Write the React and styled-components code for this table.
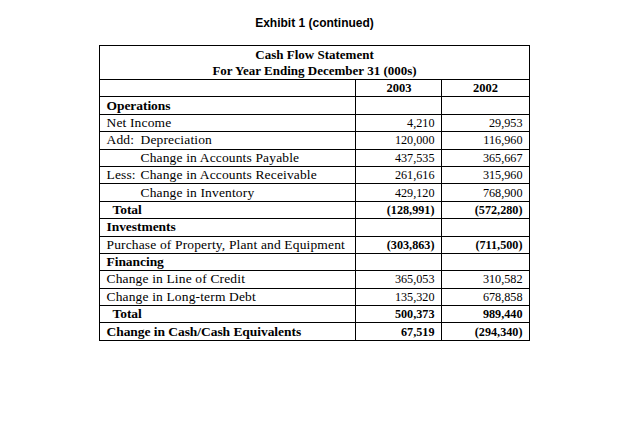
import React from "react";
import styled, { createGlobalStyle } from "styled-components";

const Global = createGlobalStyle`
  html, body { margin: 0; padding: 0; background: #fff; }
  body { width: 631px; height: 425px; overflow: hidden; }
`;

const Page = styled.div`
  width: 429px;
  margin-left: 100px;
  padding-top: 16px;
  display: flex;
  flex-direction: column;
  align-items: center;
`;

const Title = styled.h1`
  margin: 0 0 15px 0;
  font-family: "Liberation Sans", Arial, sans-serif;
  font-weight: bold;
  font-size: 12px;
  line-height: 14px;
  color: #000;
`;

const Table = styled.table`
  width: 430px;
  border-collapse: collapse;
  border: 1px solid #000;
  font-family: "Liberation Serif", "Times New Roman", serif;
  font-size: 12.5px;
  color: #000;
  table-layout: fixed;
`;

const HeadCell = styled.th`
  border: 1px solid #000;
  font-weight: bold;
  font-size: 13px;
  line-height: 16px;
  padding: 1px 0 0 0;
  text-align: center;
`;

const YearCell = styled.th`
  border: 1px solid #000;
  font-weight: bold;
  height: 16.4px;
  padding: 0;
  text-align: center;
  line-height: 14px;
`;

const Label = styled.td`
  border: 1px solid #000;
  height: 16.4px;
  padding: 0 0 0 ${(p) => (p.$indent ? p.$indent : 6)}px;
  font-size: 13.5px;
  letter-spacing: ${(p) => (p.$bold ? "-0.05px" : "0.15px")};
  line-height: 14px;
  font-weight: ${(p) => (p.$bold ? "bold" : "normal")};
  white-space: nowrap;
`;

const Num = styled.td`
  border: 1px solid #000;
  height: 16.4px;
  padding: 0 ${(p) => p.$pad}px 0 0;
  text-align: right;
  font-size: 12.2px;
  line-height: 14px;
  font-weight: ${(p) => (p.$bold ? "bold" : "normal")};
`;

const Prefix = styled.span`
  display: inline-block;
  width: 34px;
`;

const rows = [
  { label: "Operations", bold: true },
  { label: "Net Income", a: "4,210", b: "29,953" },
  { prefix: "Add:", label: "Depreciation", a: "120,000", b: "116,960" },
  { label: "Change in Accounts Payable", indent: 40, a: "437,535", b: "365,667" },
  { prefix: "Less:", label: "Change in Accounts Receivable", a: "261,616", b: "315,960" },
  { label: "Change in Inventory", indent: 40, a: "429,120", b: "768,900" },
  { label: "Total", bold: true, indent: 12, a: "(128,991)", b: "(572,280)" },
  { label: "Investments", bold: true },
  { label: "Purchase of Property, Plant and Equipment", a: "(303,863)", b: "(711,500)", boldNums: true },
  { label: "Financing", bold: true },
  { label: "Change in Line of Credit", a: "365,053", b: "310,582" },
  { label: "Change in Long-term Debt", a: "135,320", b: "678,858" },
  { label: "Total", bold: true, indent: 12, a: "500,373", b: "989,440" },
  { label: "Change in Cash/Cash Equivalents", bold: true, a: "67,519", b: "(294,340)" },
];

export default function App() {
  return (
    <>
      <Global />
      <Page>
        <Title>Exhibit 1 (continued)</Title>
        <Table>
          <colgroup>
            <col style={{ width: 256 }} />
            <col style={{ width: 86 }} />
            <col style={{ width: 87 }} />
          </colgroup>
          <thead>
            <tr>
              <HeadCell colSpan={3}>
                Cash Flow Statement
                <br />
                For Year Ending December 31 (000s)
              </HeadCell>
            </tr>
            <tr>
              <YearCell />
              <YearCell>2003</YearCell>
              <YearCell>2002</YearCell>
            </tr>
          </thead>
          <tbody>
            {rows.map((r, i) => (
              <tr key={i}>
                <Label $bold={r.bold} $indent={r.indent}>
                  {r.prefix && <Prefix>{r.prefix}</Prefix>}
                  {r.label}
                </Label>
                <Num $pad={7} $bold={r.bold || r.boldNums}>{r.a}</Num>
                <Num $pad={6} $bold={r.bold || r.boldNums}>{r.b}</Num>
              </tr>
            ))}
          </tbody>
        </Table>
      </Page>
    </>
  );
}
